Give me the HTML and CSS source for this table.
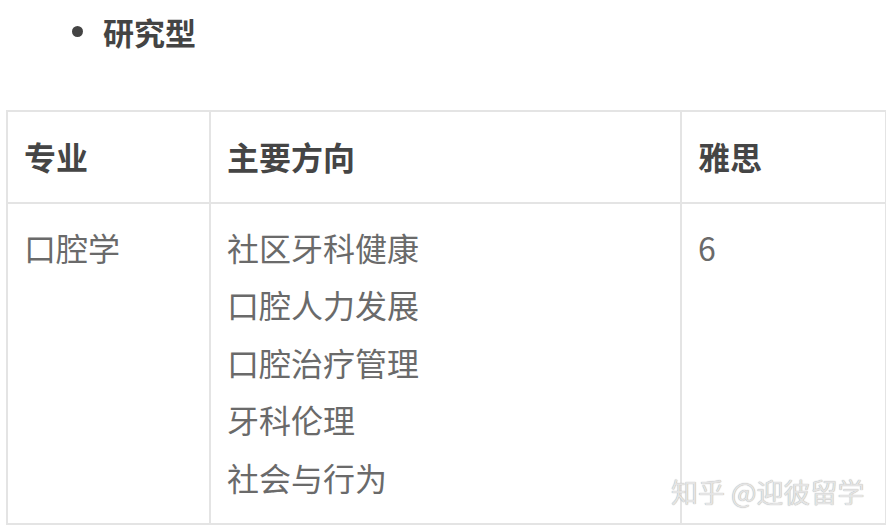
FILE: index.html
```html
<!DOCTYPE html>
<html lang="zh-CN">
<head>
<meta charset="utf-8">
<link rel="stylesheet" href="styles.css">
</head>
<body>
<div class="page">
  <ul class="list">
    <li class="item"><span class="dot"></span><span>研究型</span></li>
  </ul>
  <table class="table">
    <colgroup>
      <col class="c1"><col class="c2"><col class="c3">
    </colgroup>
    <thead>
      <tr><th>专业</th><th>主要方向</th><th>雅思</th></tr>
    </thead>
    <tbody>
      <tr>
        <td>口腔学</td>
        <td>社区牙科健康<br>口腔人力发展<br>口腔治疗管理<br>牙科伦理<br>社会与行为</td>
        <td>6</td>
      </tr>
    </tbody>
  </table>
  <div class="watermark">知乎 @迎彼留学</div>
</div>
</body>
</html>
```
FILE: styles.css
```css
html, body {
  margin: 0;
  padding: 0;
  background: #fff;
}
.page {
  position: relative;
  width: 886px;
  height: 530px;
  overflow: hidden;
  font-family: "Noto Sans CJK SC", "Noto Sans", sans-serif;
  color: #444;
}
.list {
  list-style: none;
  margin: 0;
  padding: 3px 0 0 72px;
}
.item {
  display: flex;
  align-items: center;
  gap: 20px;
  font-size: 31px;
  font-weight: 700;
  line-height: 57px;
  color: #444;
}
.dot {
  width: 11px;
  height: 11px;
  border-radius: 50%;
  background: #444;
}
.table {
  margin: 50px 0 0 6px;
  border-collapse: collapse;
  table-layout: fixed;
  width: 879px;
}
.c1 { width: 203px; }
.c2 { width: 471px; }
.c3 { width: 205px; }
.table th, .table td {
  border: 2px solid #e4e4e4;
  padding: 15px 17px 16px 16px;
  font-size: 32px;
  line-height: 57.6px;
  text-align: left;
  vertical-align: top;
}
.table th {
  font-weight: 700;
  color: #454545;
  padding-top: 16px;
}
.table td {
  font-weight: 400;
  color: #6a6a6a;
}
.watermark {
  position: absolute;
  left: 671px;
  top: 474px;
  font-size: 27px;
  line-height: 36px;
  color: #e4e4e4;
  font-weight: 400;
  text-shadow: 0 0 1px #999;
}
```
